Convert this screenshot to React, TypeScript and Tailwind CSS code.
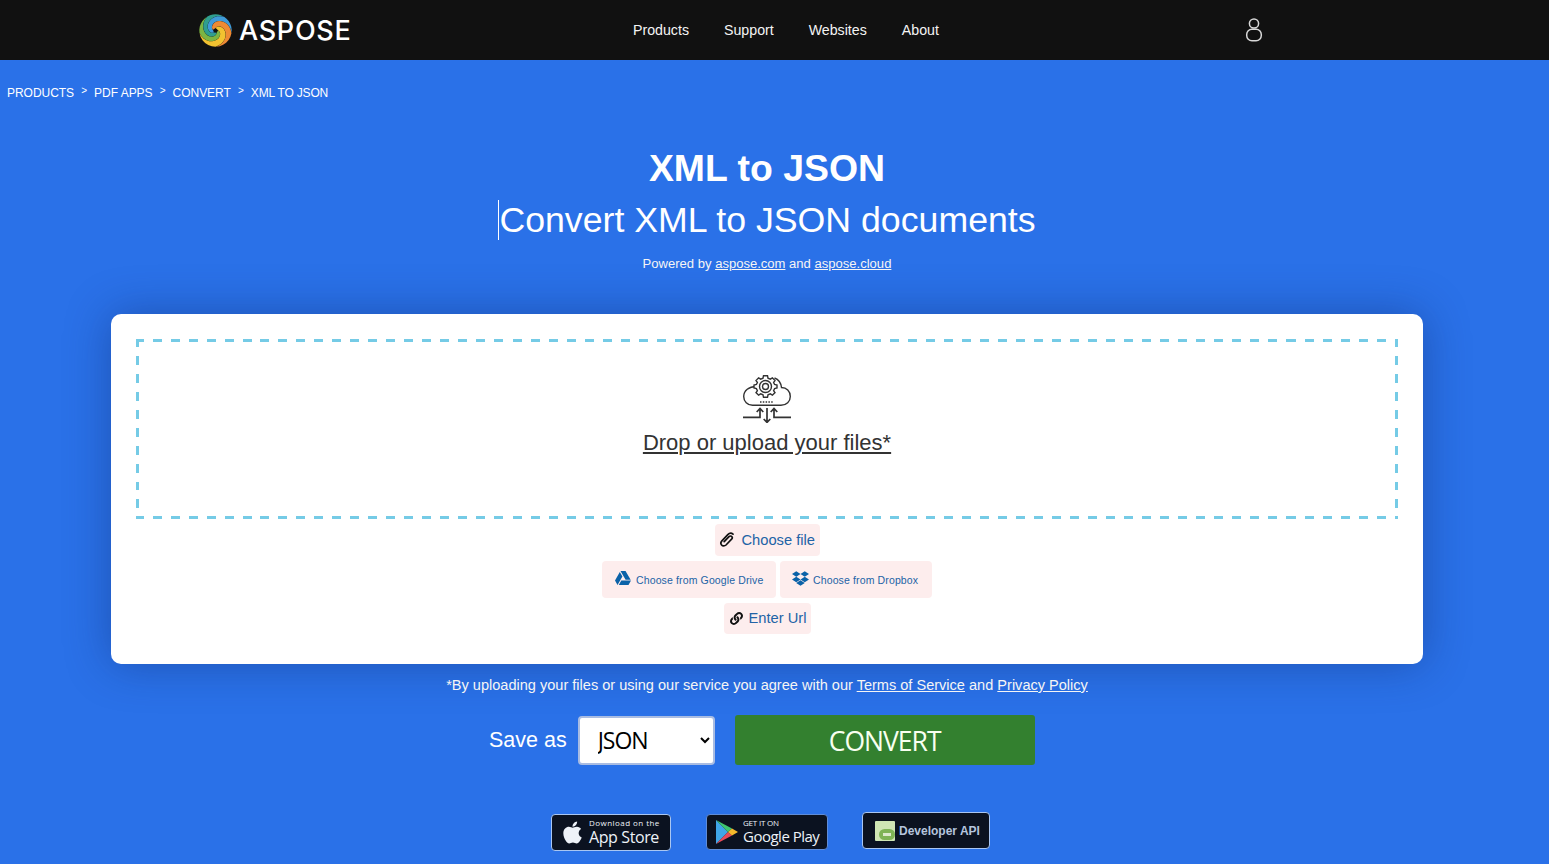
import React from "react";
import { FaApple, FaDropbox, FaGoogleDrive, FaLink } from "react-icons/fa";

const sans = "font-['Liberation_Sans',Arial,sans-serif]";

function bladePath(start: number, span: number) {
  const cx = 16.5;
  const cy = 16.5;
  const pt = (deg: number, r: number) => {
    const a = (deg * Math.PI) / 180;
    return `${(cx + r * Math.sin(a)).toFixed(2)} ${(cy - r * Math.cos(a)).toFixed(2)}`;
  };
  const edge = (a: number) => {
    const out: string[] = [];
    for (let i = 0; i <= 14; i++) {
      const t = i / 14;
      out.push(pt(a - 175 * t, 16.2 * (1 - 0.84 * t)));
    }
    return out;
  };
  const first = edge(start);
  const second = edge(start + span).reverse();
  const rim: string[] = [];
  for (let i = 1; i < 6; i++) rim.push(pt(start + span - (span * i) / 6, 16.2));
  return "M" + [...first, ...second, ...rim].join("L") + "Z";
}

function Logo() {
  const blades: [number, number, string][] = [
    [262, 66, "#7cb543"],
    [330, 60, "#2f9e8f"],
    [32, 66, "#3f9bd8"],
    [100, 78, "#ee8a34"],
    [180, 80, "#f2c230"],
  ];
  return (
    <svg width="33" height="33" viewBox="0 0 33 33" className="shrink-0">
      {blades.map(([s, w, c]) => (
        <path key={c} d={bladePath(s, w)} fill={c} />
      ))}
    </svg>
  );
}

function UserIcon() {
  return (
    <svg width="18" height="26" viewBox="0 0 18 26" fill="none" stroke="#d8d8d8" strokeWidth="1.5">
      <circle cx="9" cy="6.5" r="4.6" />
      <rect x="1.7" y="12.2" width="14.6" height="11.6" rx="5.2" />
    </svg>
  );
}

function CloudIcon() {
  return (
    <svg width="48" height="48" viewBox="0 0 48 48" fill="none" stroke="#333" strokeWidth="1.4">
      <path d="M13 11.5C6 11.5 0.7 15.5 0.7 21.5C0.7 26.5 4.5 30.3 9.5 30.3H38C43.5 30.3 47.3 26.5 47.3 21.5C47.3 16 43.5 12.5 38.5 12.5C38 8 35.5 4.5 31.5 3" />
      <path
        d="M20.5 0.7H24.5L25 3.2L27.3 4.2L29.4 2.8L32 5.5L30.6 7.6L31.6 9.5L34 10V13L31.6 13.6L30.6 15.6L32 17.6L29.4 20.2L27.3 18.8L25 19.8L24.5 22.3H20.5L20 19.8L17.7 18.8L15.6 20.2L13 17.6L14.4 15.6L13.4 13.6L11 13V10L13.4 9.5L14.4 7.6L13 5.5L15.6 2.8L17.7 4.2L20 3.2Z"
        fill="#fff"
      />
      <circle cx="22.5" cy="11.5" r="6" />
      <circle cx="22.5" cy="11.5" r="3" />
      <path d="M17 27H31" strokeWidth="1.5" strokeDasharray="1.5 1.3" />
      <path d="M0 42.3H17V34M13.7 37L17 33.5L20.3 37" strokeWidth="1.7" />
      <path d="M48 42.3H31V34M27.7 37L31 33.5L34.3 37" strokeWidth="1.7" />
      <path d="M24 33V47M20.7 44L24 47.4L27.3 44" strokeWidth="1.7" />
    </svg>
  );
}

function Clip() {
  return (
    <svg width="16" height="16" viewBox="0 0 16 16" fill="none" stroke="#111" strokeWidth="1.7" strokeLinecap="round">
      <path d="M5.2 9.7L10 4.6C10.9 3.7 12.3 3.9 12.9 4.7C13.5 5.5 13.3 6.5 12.6 7.2L7 13C5.6 14.3 3.6 14.2 2.6 13C1.6 11.8 1.7 10.1 2.9 8.8L8.8 2.7C10.4 1.1 12.6 1 14 2.2" />
    </svg>
  );
}

function PlayIcon() {
  return (
    <svg width="24" height="26" viewBox="0 0 24 26" className="shrink-0">
      <path d="M1 1L13 13L1 25Z" fill="#3fa6e8" />
      <path d="M1 1L17 9.5L13 13Z" fill="#3fc66f" />
      <path d="M1 25L17 16.5L13 13Z" fill="#e84a5a" />
      <path d="M17 9.5L23 13L17 16.5L13 13Z" fill="#f5b92c" />
    </svg>
  );
}

function ApiIcon() {
  return (
    <svg width="20" height="20" viewBox="0 0 20 20" className="shrink-0">
      <rect width="20" height="20" rx="1" fill="#cfe5b4" />
      <rect x="4" y="8" width="16" height="11" rx="5.5" fill="#7fb356" />
      <rect x="8" y="12" width="8" height="3" fill="#dce9cc" />
    </svg>
  );
}

export default function App() {
  const crumbs = ["PRODUCTS", "PDF APPS", "CONVERT", "XML TO JSON"];
  return (
    <div className={`${sans} h-[864px] overflow-hidden bg-[#2a71e8] text-white`}>
      <header className="flex h-[60px] items-center bg-[#111111] pl-[199px]">
        <div className="flex w-[434px] items-center gap-[7px]">
          <Logo />
          <span className="font-['Inter',sans-serif] text-[27px] font-medium leading-none tracking-[0.7px]">ASPOSE</span>
        </div>
        <nav className="flex w-[612px] gap-[35px] pt-[1px] text-[14.2px] text-[#f4f4f4]">
          <span>Products</span>
          <span>Support</span>
          <span>Websites</span>
          <span>About</span>
        </nav>
        <UserIcon />
      </header>

      <nav className="flex h-[41px] items-start pl-[7px] pt-[26px] text-[12px] leading-[15px] tracking-[-0.03px]">
        {crumbs.map((c, i) => (
          <React.Fragment key={c}>
            {i > 0 && <span className="h-[15px] w-[20px] text-center text-[10px] leading-[10px]">&gt;</span>}
            <span className={i === 3 ? "tracking-[-0.17px]" : ""}>{c}</span>
          </React.Fragment>
        ))}
      </nav>

      <main className="ml-[111px] w-[1312px]">
        <h1 className="mt-[44px] text-center text-[37.4px] font-bold leading-[46px]">XML to JSON</h1>
        <h2 className="mt-[9px] text-center text-[35.7px] leading-[40px]">
          <span className="inline-block border-l border-white">Convert XML to JSON documents</span>
        </h2>
        <p className="mt-[15px] text-center text-[13.05px] leading-[18px] text-[#f5f5f5]">
          Powered by <a className="underline">aspose.com</a> and <a className="underline">aspose.cloud</a>
        </p>

        <section className="mt-[41px] flex h-[350px] flex-col items-center rounded-[10px] bg-white px-[25px] pt-[25px] shadow-[0_0_45px_rgba(15,45,110,0.45)]">
          <div className="flex h-[180px] w-full flex-col items-center pt-[36px] [background:repeating-linear-gradient(90deg,#75cbe6_0_7.5px,transparent_7.5px_16.5px,#75cbe6_16.5px_18px)_top/100%_3px_no-repeat,repeating-linear-gradient(90deg,#75cbe6_0_7.5px,transparent_7.5px_16.5px,#75cbe6_16.5px_18px)_bottom/100%_3px_no-repeat,repeating-linear-gradient(180deg,#75cbe6_0_7.5px,transparent_7.5px_16.5px,#75cbe6_16.5px_18px)_left/3px_100%_no-repeat,repeating-linear-gradient(180deg,#75cbe6_0_7.5px,transparent_7.5px_16.5px,#75cbe6_16.5px_18px)_right/3px_100%_no-repeat]">
            <CloudIcon />
            <span className="mt-[6px] text-[22px] leading-[28px] text-[#333] underline">Drop or upload your files*</span>
          </div>
          <button className="mt-[5px] flex h-[32px] w-[105px] items-center rounded-[4px] bg-[#fdeded] pl-[4px] text-[14.7px] text-[#2263a6]">
            <Clip />
            <span className="ml-[7px]">Choose file</span>
          </button>
          <div className="mt-[5px] flex gap-[4px] text-[10.5px] tracking-[0.13px] text-[#2263a6] [word-spacing:2px]">
            <button className="flex h-[37px] w-[174px] items-center rounded-[4px] bg-[#fdeded] pl-[13px]">
              <FaGoogleDrive className="mb-[3px] text-[16px] text-[#0b62a8]" />
              <span className="ml-[5px] mt-[3px]">Choose from Google Drive</span>
            </button>
            <button className="flex h-[37px] w-[152px] items-center rounded-[4px] bg-[#fdeded] pl-[12px]">
              <FaDropbox className="mb-[3px] text-[17px] text-[#0b62a8]" />
              <span className="ml-[4px] mt-[3px]">Choose from Dropbox</span>
            </button>
          </div>
          <button className="mt-[5px] flex h-[31px] w-[87px] items-center rounded-[4px] bg-[#fdeded] pl-[6px] text-[14.7px] text-[#2263a6]">
            <FaLink className="text-[13px] text-[#111]" />
            <span className="ml-[6px]">Enter Url</span>
          </button>
        </section>

        <p className="mt-[12px] text-center text-[14.56px] leading-[18px] text-[#f5f5f5]">
          *By uploading your files or using our service you agree with our <a className="underline">Terms of Service</a> and <a className="underline">Privacy Policy</a>
        </p>

        <div className="mt-[21px] flex h-[50px] items-center pl-[378px]">
          <label className="text-[21.5px]">Save as</label>
          <select
            defaultValue="JSON"
            className="ml-[11px] h-[49px] w-[137px] rounded-[4px] border-2 border-[#a9bce2] bg-white pl-[14px] font-['Open_Sans',sans-serif] text-[23px] tracking-[-1px] text-black"
          >
            <option>JSON</option>
            <option>PDF</option>
          </select>
          <button className="ml-[20px] h-[50px] w-[300px] rounded-[3px] bg-[#33802f] pt-[3px] font-['Open_Sans',sans-serif] text-[26.5px] tracking-[-1px] text-[#f8fff0]">
            CONVERT
          </button>
        </div>

        <div className="mt-[47px] flex items-start pl-[440px]">
          <div className="mt-[2px] flex h-[37px] w-[120px] items-center rounded-[4px] border border-[#a9c6f2] bg-[#0b1220] pl-[8px]">
            <FaApple className="text-[25px] text-[#eef2f8]" />
            <div className="ml-[4px] flex flex-col font-['Open_Sans',sans-serif] text-[#eef2f8]">
              <span className="text-[8px] leading-[9px] tracking-[0.45px]">Download on the</span>
              <span className="text-[16px] font-medium leading-[20px] tracking-[-0.4px]">App Store</span>
            </div>
          </div>
          <div className="ml-[35px] mt-[2px] flex h-[36px] w-[122px] items-center rounded-[4px] border border-[#5f8cd8] bg-[#0b1220] pl-[8px]">
            <PlayIcon />
            <div className="ml-[4px] flex flex-col font-['Open_Sans',sans-serif] text-[#eef2f8]">
              <span className="text-[8px] leading-[9px] tracking-[-0.2px]">GET IT ON</span>
              <span className="text-[15px] leading-[19px] tracking-[-0.5px]">Google Play</span>
            </div>
          </div>
          <div className="ml-[34px] flex h-[37px] w-[128px] items-center rounded-[4px] border border-[#a9c6f2] bg-[#0b1220] pl-[12px]">
            <ApiIcon />
            <span className="ml-[4px] text-[12px] font-bold text-[#b5c5de]">Developer API</span>
          </div>
        </div>
      </main>
    </div>
  );
}
